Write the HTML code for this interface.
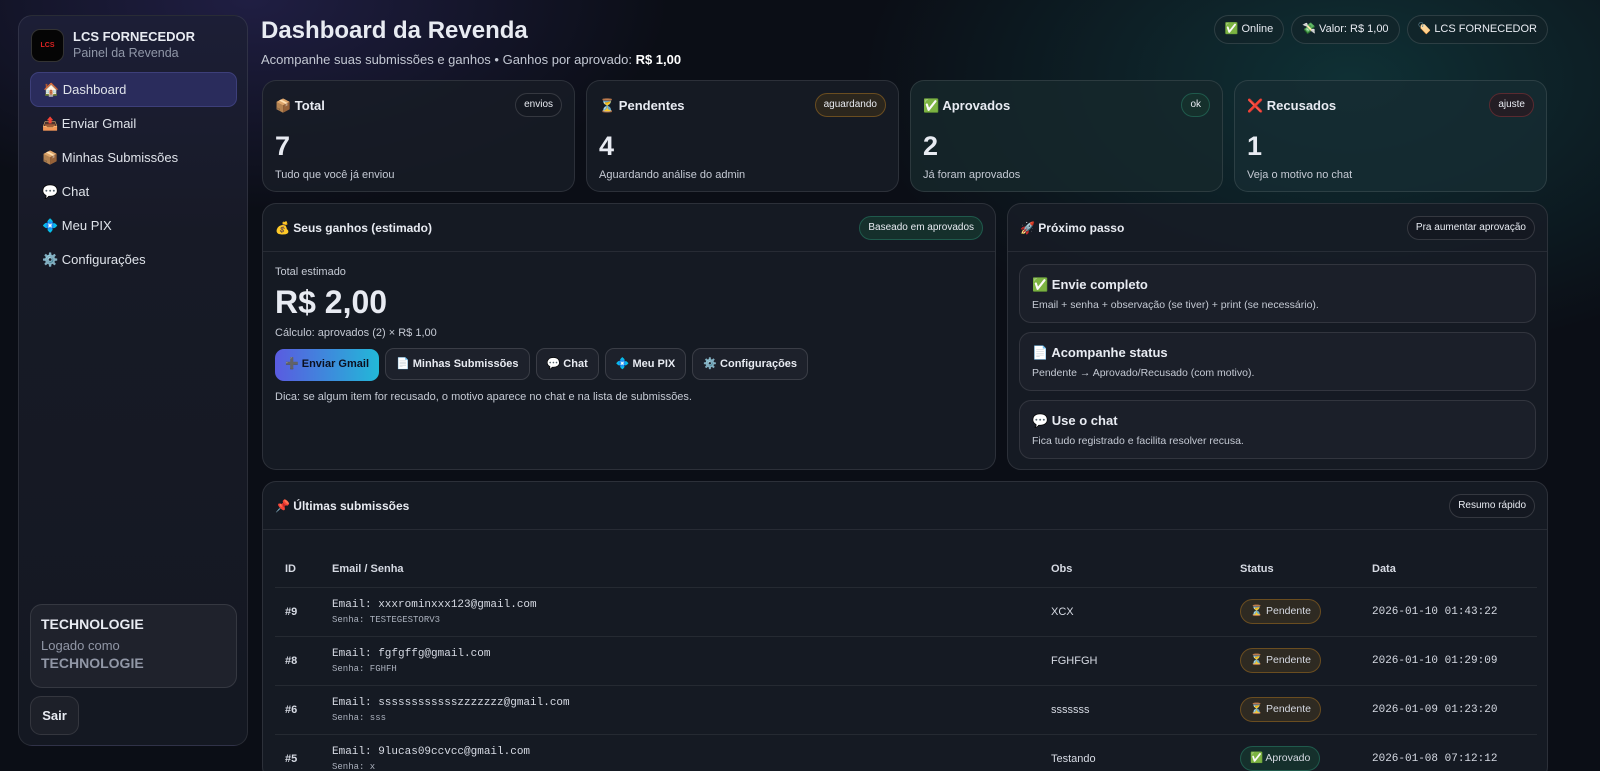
<!DOCTYPE html>
<html><head><meta charset="utf-8"><style>
*{box-sizing:border-box;margin:0;padding:0}
html{width:1600px;height:771px;overflow:hidden;background:#0b0e16}
body{width:1600px;height:771px;overflow:hidden;font-family:"Liberation Sans","DejaVu Sans",sans-serif;color:#e8ebf2;
background:radial-gradient(600px 300px at 250px 0,rgba(70,60,150,.35),transparent 70%),radial-gradient(700px 400px at 1350px 80px,rgba(20,90,90,.45),transparent 70%),#0b0e16;position:relative}
.side{position:absolute;left:18px;top:15px;width:230px;height:731px;border:1px solid rgba(255,255,255,.09);border-radius:14px;background:linear-gradient(180deg,#1c1e36 0%,#171a26 30%,#141822 100%)}
.brand{position:absolute;left:12px;top:13px;display:flex;gap:9px;align-items:center}
.logo{width:33px;height:33px;border-radius:9px;background:#050505;border:1px solid #333;display:flex;align-items:center;justify-content:center;font-size:7px;color:#d22;font-weight:bold}
.brand b{font-size:13px;display:block}
.brand span{font-size:12.5px;color:#9097a8}
.nav{position:absolute;left:11px;top:56px;width:207px}
.nav div{height:34px;line-height:34px;padding-left:12px;font-size:13px;color:#dfe3ea}
.nav .act{background:#2a2c5c;border:1px solid #3d3f7a;border-radius:9px;height:35px}
.user{position:absolute;left:11px;top:588px;width:207px;height:84px;border:1px solid rgba(255,255,255,.1);border-radius:12px;background:#1f222c;padding:11px 10px}
.user b{font-size:14px;display:block}
.user .s{font-size:13px;color:#9197a6;margin-top:6px}
.user .g{font-size:14px;color:#9197a6;font-weight:bold;margin-top:2px}
.sair{position:absolute;left:11px;top:680px;width:49px;height:39px;border:1px solid rgba(255,255,255,.1);border-radius:11px;background:#1d2029;font-weight:bold;font-size:13px;text-align:center;line-height:37px}
h1{position:absolute;left:261px;top:17px;font-size:24px;font-weight:bold}
.sub{position:absolute;left:261px;top:52px;font-size:13px;color:#c3c8d3}
.pills{position:absolute;right:52px;top:15px;display:flex;gap:7px}
.pill{height:29px;border:1px solid rgba(255,255,255,.12);border-radius:15px;padding:0 10px;font-size:11px;line-height:27px;background:rgba(20,35,40,.6)}
.card{position:absolute;border:1px solid rgba(255,255,255,.1);border-radius:14px;background:rgba(24,28,38,.85)}
.stat{top:80px;width:313px;height:112px}
.stat .t{position:absolute;left:12px;top:17px;font-size:13px;font-weight:bold}
.stat .n{position:absolute;left:12px;top:50px;font-size:27px;font-weight:900}
.stat .d{position:absolute;left:12px;top:88px;font-size:11px;color:#c5cad4}
.tag{position:absolute;right:12px;top:12px;height:24px;border:1px solid rgba(255,255,255,.14);border-radius:12px;padding:0 8px;font-size:10px;line-height:22px;background:#141821;font-weight:normal}
.hd{height:48px;border-bottom:1px solid rgba(255,255,255,.08);padding:17px 12px;font-size:12px;font-weight:bold;position:relative}
.hd .tag{top:12px}
.btn{display:inline-block;height:32px;border:1px solid rgba(255,255,255,.13);border-radius:9px;padding:0 10px;line-height:30px;font-size:11px;font-weight:bold;background:#1d212b;margin-right:6px}
.step{margin:0 11px 9px;height:59px;border:1px solid rgba(255,255,255,.1);border-radius:12px;background:#1b1f29;padding:12px 12px}
.step b{font-size:13px;display:block}
.step span{font-size:10.5px;color:#c5cad4;display:block;margin-top:6px}
table{position:absolute;left:12px;top:70px;width:1262px;border-collapse:collapse}
th{text-align:left;font-size:11px;height:35px;color:#d6dae3;border-bottom:1px solid rgba(255,255,255,.07)}
td{height:49px;font-size:11px;border-bottom:1px solid rgba(255,255,255,.07);color:#d6dae3}
.m{font-family:"Liberation Mono","DejaVu Sans Mono",monospace}
.st{display:inline-block;height:25px;border:1px solid #6a4d20;border-radius:13px;background:#2e2a22;padding:0 9px;line-height:23px;font-size:10.5px}
</style></head><body>
<div class="side">
 <div class="brand"><div class="logo">LCS</div><div><b>LCS FORNECEDOR</b><span>Painel da Revenda</span></div></div>
 <div class="nav">
  <div class="act">🏠 Dashboard</div><div>📤 Enviar Gmail</div><div>📦 Minhas Submissões</div><div>💬 Chat</div><div>💠 Meu PIX</div><div>⚙️ Configurações</div>
 </div>
 <div class="user"><b>TECHNOLOGIE</b><div class="s">Logado como</div><div class="g">TECHNOLOGIE</div></div>
 <div class="sair">Sair</div>
</div>
<h1>Dashboard da Revenda</h1>
<div class="sub">Acompanhe suas submissões e ganhos • Ganhos por aprovado: <b style="color:#fff">R$ 1,00</b></div>
<div class="pills"><div class="pill">✅ Online</div><div class="pill">💸 Valor: R$ 1,00</div><div class="pill">🏷️ LCS FORNECEDOR</div></div>

<div class="card stat" style="left:262px"><div class="t">📦 Total</div><div class="tag">envios</div><div class="n">7</div><div class="d">Tudo que você já enviou</div></div>
<div class="card stat" style="left:586px"><div class="t">⏳ Pendentes</div><div class="tag" style="border-color:#6a4d20;background:#2b261d">aguardando</div><div class="n">4</div><div class="d">Aguardando análise do admin</div></div>
<div class="card stat" style="left:910px;background:rgba(22,40,44,.8)"><div class="t">✅ Aprovados</div><div class="tag" style="border-color:#1f5a4c;background:#15302c">ok</div><div class="n">2</div><div class="d">Já foram aprovados</div></div>
<div class="card stat" style="left:1234px;background:rgba(22,44,50,.8)"><div class="t">❌ Recusados</div><div class="tag" style="border-color:#5a2a30;background:#231d24">ajuste</div><div class="n">1</div><div class="d">Veja o motivo no chat</div></div>

<div class="card" style="left:262px;top:203px;width:734px;height:267px">
 <div class="hd">💰 Seus ganhos (estimado)<div class="tag" style="border-color:#1f5a4c;background:#15302c">Baseado em aprovados</div></div>
 <div style="padding:14px 12px">
  <div style="font-size:11px;color:#c5cad4">Total estimado</div>
  <div style="font-size:32px;font-weight:900;margin-top:6px">R$ 2,00</div>
  <div style="font-size:11px;color:#c5cad4;margin-top:6px">Cálculo: aprovados (2) × R$ 1,00</div>
  <div style="margin-top:9px"><span class="btn" style="background:linear-gradient(90deg,#5a5be0,#22b8d8);border:0;color:#0b1020">➕ Enviar Gmail</span><span class="btn">📄 Minhas Submissões</span><span class="btn">💬 Chat</span><span class="btn">💠 Meu PIX</span><span class="btn">⚙️ Configurações</span></div>
  <div style="font-size:11px;color:#c5cad4;margin-top:10px">Dica: se algum item for recusado, o motivo aparece no chat e na lista de submissões.</div>
 </div>
</div>
<div class="card" style="left:1007px;top:203px;width:541px;height:267px">
 <div class="hd">🚀 Próximo passo<div class="tag">Pra aumentar aprovação</div></div>
 <div style="height:12px"></div>
 <div class="step"><b>✅ Envie completo</b><span>Email + senha + observação (se tiver) + print (se necessário).</span></div>
 <div class="step"><b>📄 Acompanhe status</b><span>Pendente → Aprovado/Recusado (com motivo).</span></div>
 <div class="step"><b>💬 Use o chat</b><span>Fica tudo registrado e facilita resolver recusa.</span></div>
</div>
<div class="card" style="left:262px;top:481px;width:1286px;height:300px;overflow:hidden">
 <div class="hd">📌 Últimas submissões<div class="tag">Resumo rápido</div></div>
 <table>
  <tr><th style="width:57px;padding-left:10px">ID</th><th style="width:719px">Email / Senha</th><th style="width:189px">Obs</th><th style="width:132px">Status</th><th>Data</th></tr>
  <tr><td style="padding-left:10px;font-weight:bold">#9</td><td class="m">Email: xxxrominxxx123@gmail.com<div style="font-size:9px;color:#aab0bc;margin-top:4px">Senha: TESTEGESTORV3</div></td><td>XCX</td><td><span class="st">⏳ Pendente</span></td><td class="m">2026-01-10 01:43:22</td></tr>
  <tr><td style="padding-left:10px;font-weight:bold">#8</td><td class="m">Email: fgfgffg@gmail.com<div style="font-size:9px;color:#aab0bc;margin-top:4px">Senha: FGHFH</div></td><td>FGHFGH</td><td><span class="st">⏳ Pendente</span></td><td class="m">2026-01-10 01:29:09</td></tr>
  <tr><td style="padding-left:10px;font-weight:bold">#6</td><td class="m">Email: sssssssssssszzzzzzz@gmail.com<div style="font-size:9px;color:#aab0bc;margin-top:4px">Senha: sss</div></td><td>sssssss</td><td><span class="st">⏳ Pendente</span></td><td class="m">2026-01-09 01:23:20</td></tr>
  <tr><td style="padding-left:10px;font-weight:bold">#5</td><td class="m">Email: 9lucas09ccvcc@gmail.com<div style="font-size:9px;color:#aab0bc;margin-top:4px">Senha: x</div></td><td>Testando</td><td><span class="st" style="border-color:#1f5a4c;background:#15302c">✅ Aprovado</span></td><td class="m">2026-01-08 07:12:12</td></tr>
 </table>
</div>
</body></html>
